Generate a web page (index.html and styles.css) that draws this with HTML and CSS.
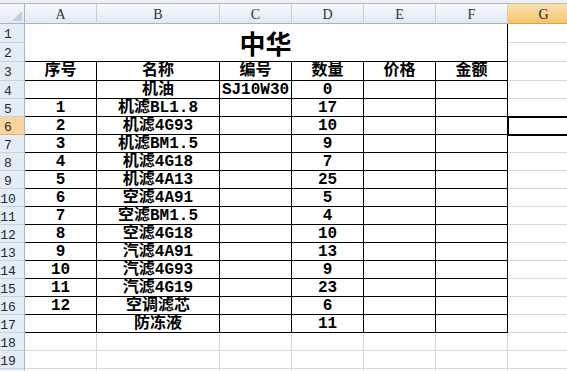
FILE: index.html
```html
<!DOCTYPE html>
<html lang="zh-CN">
<head>
<meta charset="utf-8">
<title>中华</title>
<link rel="stylesheet" href="styles.css">
</head>
<body>
<div class="app">
  <div class="strip"></div>
  <div class="sheet">
    <div class="corner"><span class="tri"></span></div>
    <div class="ch">A</div><div class="ch">B</div><div class="ch">C</div><div class="ch">D</div><div class="ch">E</div><div class="ch">F</div><div class="ch sel">G</div>

    <div class="rh">1</div><div class="title">中华</div><div class="c"></div>
    <div class="rh">2</div><div class="c"></div>

    <div class="rh">3</div><div class="t">序号</div><div class="t">名称</div><div class="t">编号</div><div class="t">数量</div><div class="t">价格</div><div class="t">金额</div><div class="c"></div>
    <div class="rh">4</div><div class="t"></div><div class="t">机油</div><div class="t">SJ10W30</div><div class="t">0</div><div class="t"></div><div class="t"></div><div class="c"></div>
    <div class="rh">5</div><div class="t">1</div><div class="t">机滤BL1.8</div><div class="t"></div><div class="t">17</div><div class="t"></div><div class="t"></div><div class="c"></div>
    <div class="rh sel">6</div><div class="t">2</div><div class="t">机滤4G93</div><div class="t"></div><div class="t">10</div><div class="t"></div><div class="t"></div><div class="c act"></div>
    <div class="rh">7</div><div class="t">3</div><div class="t">机滤BM1.5</div><div class="t"></div><div class="t">9</div><div class="t"></div><div class="t"></div><div class="c"></div>
    <div class="rh">8</div><div class="t">4</div><div class="t">机滤4G18</div><div class="t"></div><div class="t">7</div><div class="t"></div><div class="t"></div><div class="c"></div>
    <div class="rh">9</div><div class="t">5</div><div class="t">机滤4A13</div><div class="t"></div><div class="t">25</div><div class="t"></div><div class="t"></div><div class="c"></div>
    <div class="rh">10</div><div class="t">6</div><div class="t">空滤4A91</div><div class="t"></div><div class="t">5</div><div class="t"></div><div class="t"></div><div class="c"></div>
    <div class="rh">11</div><div class="t">7</div><div class="t">空滤BM1.5</div><div class="t"></div><div class="t">4</div><div class="t"></div><div class="t"></div><div class="c"></div>
    <div class="rh">12</div><div class="t">8</div><div class="t">空滤4G18</div><div class="t"></div><div class="t">10</div><div class="t"></div><div class="t"></div><div class="c"></div>
    <div class="rh">13</div><div class="t">9</div><div class="t">汽滤4A91</div><div class="t"></div><div class="t">13</div><div class="t"></div><div class="t"></div><div class="c"></div>
    <div class="rh">14</div><div class="t">10</div><div class="t">汽滤4G93</div><div class="t"></div><div class="t">9</div><div class="t"></div><div class="t"></div><div class="c"></div>
    <div class="rh">15</div><div class="t">11</div><div class="t">汽滤4G19</div><div class="t"></div><div class="t">23</div><div class="t"></div><div class="t"></div><div class="c"></div>
    <div class="rh">16</div><div class="t">12</div><div class="t">空调滤芯</div><div class="t"></div><div class="t">6</div><div class="t"></div><div class="t"></div><div class="c"></div>
    <div class="rh">17</div><div class="t"></div><div class="t">防冻液</div><div class="t"></div><div class="t">11</div><div class="t"></div><div class="t"></div><div class="c"></div>

    <div class="rh">18</div><div class="c"></div><div class="c"></div><div class="c"></div><div class="c"></div><div class="c"></div><div class="c"></div><div class="c"></div>
    <div class="rh">19</div><div class="c"></div><div class="c"></div><div class="c"></div><div class="c"></div><div class="c"></div><div class="c"></div><div class="c"></div>
    <div class="rh"></div><div class="c"></div><div class="c"></div><div class="c"></div><div class="c"></div><div class="c"></div><div class="c"></div><div class="c"></div>
  </div>
</div>
</body>
</html>
```
FILE: styles.css
```css
html, body {
  margin: 0;
  padding: 0;
  background: #ffffff;
}

.app {
  width: 567px;
  height: 371px;
  overflow: hidden;
  background: #ffffff;
}

.strip {
  height: 3px;
  background: #eef1f5;
  border-bottom: 1px solid #a9b8cb;
}

.sheet {
  display: grid;
  grid-template-columns: 25px 72px 123px 72px 72px 72px 72px 72px;
  grid-template-rows: 20px 19px 19px 19px repeat(17, 18px);
  width: 580px;
}

.sheet > div {
  box-sizing: border-box;
  display: flex;
  align-items: center;
  justify-content: center;
  overflow: hidden;
  white-space: nowrap;
}

.corner {
  position: relative;
  background: linear-gradient(#f6f8fc, #e3eaf4);
  border-right: 1px solid #9eb6ce;
  border-bottom: 1px solid #9eb6ce;
}

.tri {
  position: absolute;
  right: 2px;
  bottom: 2px;
  width: 0;
  height: 0;
  border-left: 10px solid transparent;
  border-bottom: 10px solid #c3cfdd;
}

.ch {
  background: linear-gradient(#f7f9fd, #e2e9f3);
  border-right: 1px solid #c3d0e1;
  border-bottom: 1px solid #9eb6ce;
  font: 14px "Liberation Serif", serif;
  color: #2a3440;
  padding-top: 2px;
}

.ch.sel {
  background: linear-gradient(#fbe2b3, #f3c56d);
  border-bottom: 1px solid #f29b3c;
  border-right: 1px solid #f1c06a;
  color: #20262e;
}

.rh {
  background: #e4ecf7;
  border-right: 1px solid #9eb6ce;
  border-bottom: 1px solid #c5d2e4;
  font: 13px "Liberation Mono", monospace;
  color: #202a36;
  padding: 3px 8px 0 0;
}

.sheet > .rh.sel {
  background: #fcd59c;
  border-bottom: 1px solid #f0b05c;
}

.c {
  border-right: 1px solid #d0d7e5;
  border-bottom: 1px solid #d0d7e5;
}

.t {
  border-right: 1px solid #000000;
  border-bottom: 1px solid #000000;
  font: bold 16px/17px "Liberation Mono", "Noto Sans CJK SC", monospace;
  color: #000000;
  padding-top: 1px;
}

.sheet > .title {
  grid-column: 2 / span 6;
  grid-row: span 2;
  border-right: 1px solid #000000;
  border-bottom: 1px solid #000000;
  font: bold 26px/30px "Noto Sans CJK SC", sans-serif;
  color: #000000;
  padding-right: 1px;
}

.act {
  outline: 2px solid #000000;
  outline-offset: -1px;
  position: relative;
  z-index: 1;
}
```
